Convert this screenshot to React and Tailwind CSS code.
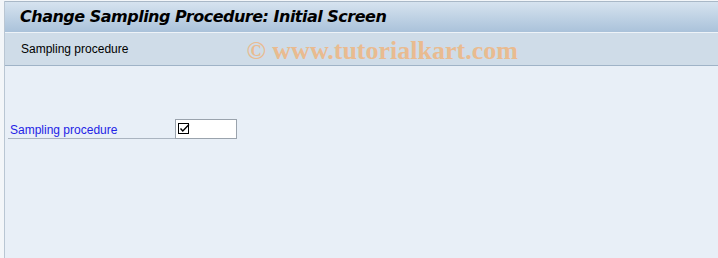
export default function App() {
  return (
    <div className="w-[718px] h-[258px] bg-[#f3f6f9] pl-[4px] pt-[1px] overflow-hidden">
      <div className="h-full border-l border-[#b9c6d3] bg-[#e8eff7] flex flex-col">
        {/* Title bar */}
        <div className="h-[31px] border-t border-[#a9b8c7] bg-gradient-to-b from-[#d6e3ef] to-[#aac2da] flex items-center pl-[15px]">
          <h1 className="text-[16px] font-bold italic text-black font-['DejaVu_Sans',sans-serif] tracking-[-0.5px]">
            Change Sampling Procedure: Initial Screen
          </h1>
        </div>
        {/* Toolbar */}
        <div className="h-[34px] border-t border-[#eef3f8] border-b border-b-[#9fb3c7] bg-[#cfdce8] flex items-center pl-[16px] gap-[118px]">
          <span className="text-[12px] text-black font-['Liberation_Sans',sans-serif]">Sampling procedure</span>
          <span className="text-[26px] font-bold text-[#e9bb90] font-['Liberation_Serif',serif] mt-[4px] leading-none">
            © www.tutorialkart.com
          </span>
        </div>
        {/* Content */}
        <div className="pt-[53px] pl-[3px]">
          <div className="flex items-end">
            <div className="w-[167px] h-[20px] border-b border-[#aab4c0] flex items-center pl-[2px] pt-[2px]">
              <span className="text-[12px] text-[#2323e6] font-['Liberation_Sans',sans-serif]">Sampling procedure</span>
            </div>
            <div className="w-[62px] h-[20px] bg-white border border-[#9aa3ad] flex items-center pl-[2px]">
              <svg width="12" height="12" viewBox="0 0 12 12">
                <rect x="0.5" y="0.5" width="10" height="10" fill="none" stroke="#000" strokeWidth="1" />
                <path d="M2.5 5.5 L4.8 8 L11 1.5" fill="none" stroke="#000" strokeWidth="1.4" />
              </svg>
            </div>
          </div>
        </div>
      </div>
    </div>
  );
}
